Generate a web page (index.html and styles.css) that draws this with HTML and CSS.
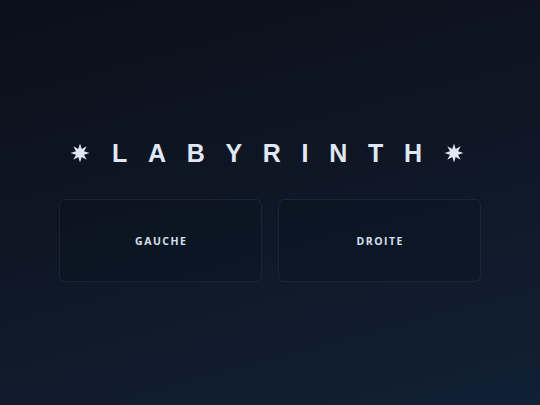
FILE: index.html
```html
<!DOCTYPE html>
<html>
<head>
<meta charset="utf-8">
<link rel="stylesheet" href="styles.css">
</head>
<body>
<main class="screen">
  <h1 class="title">
    <svg class="star" viewBox="-10 -10 20 20" width="20" height="20"><polygon points="0,-9.5 1.7,-4 6.7,-6.7 4,-1.7 9.5,0 4,1.7 6.7,6.7 1.7,4 0,9.5 -1.7,4 -6.7,6.7 -4,1.7 -9.5,0 -4,-1.7 -6.7,-6.7 -1.7,-4"/></svg>
    <span class="word">LABYRINTH</span>
    <svg class="star" viewBox="-10 -10 20 20" width="20" height="20"><polygon points="0,-9.5 1.7,-4 6.7,-6.7 4,-1.7 9.5,0 4,1.7 6.7,6.7 1.7,4 0,9.5 -1.7,4 -6.7,6.7 -4,1.7 -9.5,0 -4,-1.7 -6.7,-6.7 -1.7,-4"/></svg>
  </h1>
  <div class="choices">
    <button class="choice">GAUCHE</button>
    <button class="choice">DROITE</button>
  </div>
</main>
</body>
</html>
```
FILE: styles.css
```css
html, body {
  margin: 0;
  padding: 0;
}
body {
  width: 540px;
  height: 405px;
  overflow: hidden;
  background: linear-gradient(165deg, #0b0f19 0%, #0f1726 50%, #112035 100%);
}
.screen {
  display: flex;
  flex-direction: column;
  align-items: center;
  padding-top: 138px;
}
.title {
  margin: 0;
  padding-right: 6px;
  display: flex;
  align-items: center;
  gap: 22px;
  height: 30px;
  color: #e1e8f5;
  font-family: "Liberation Sans", Arial, sans-serif;
  font-weight: bold;
  font-size: 25px;
  line-height: 30px;
}
.word {
  letter-spacing: 20.7px;
  margin-right: -20.7px;
}
.star {
  fill: #e1e8f5;
  display: block;
}
.choices {
  display: flex;
  gap: 16px;
  margin-top: 31px;
}
.choice {
  width: 203px;
  height: 83px;
  border: 1px solid rgba(120, 150, 190, 0.13);
  border-radius: 6px;
  background: rgba(10, 16, 28, 0.35);
  color: #d6e0ee;
  font-family: "Open Sans", "Noto Sans", sans-serif;
  font-weight: 700;
  font-size: 10.5px;
  letter-spacing: 1.5px;
  padding: 0 0 0 1.5px;
  cursor: pointer;
}
```
